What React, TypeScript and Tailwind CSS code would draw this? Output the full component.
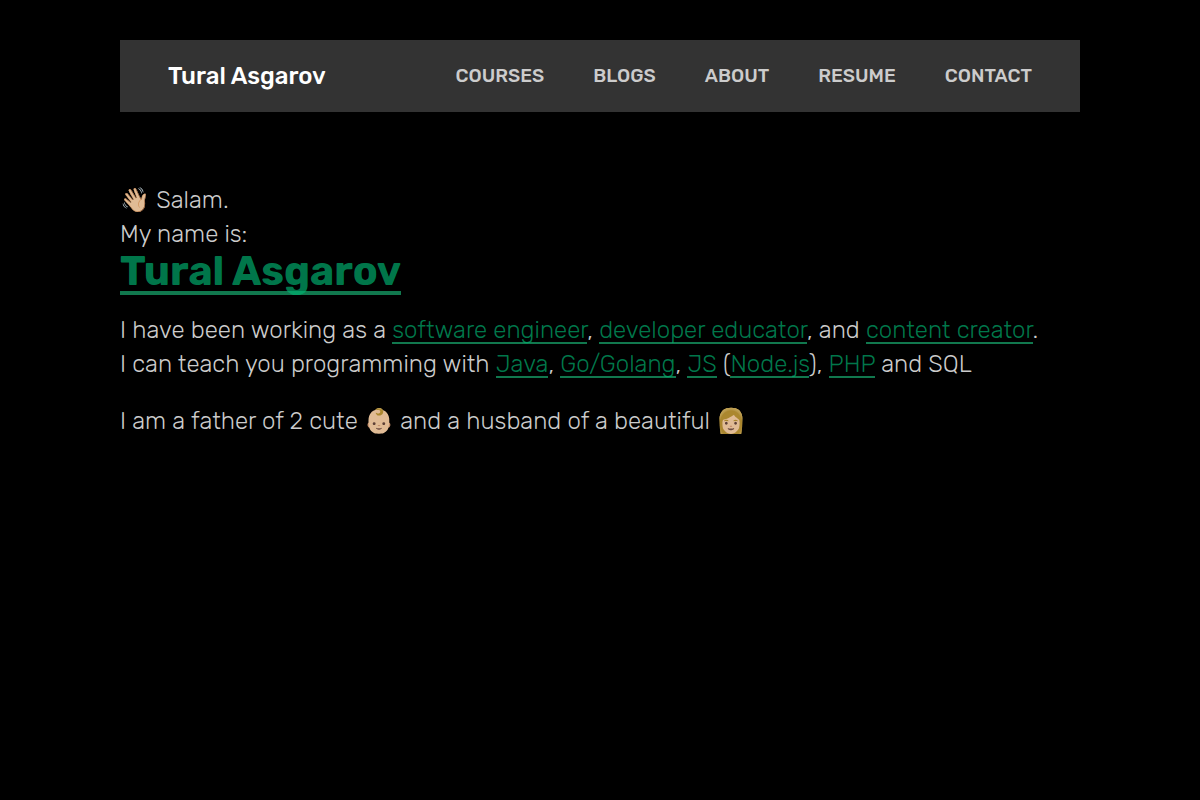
import type { ReactNode } from "react"

const navItems = ["Courses", "Blogs", "About", "Resume", "Contact"]

export default function App() {
    return (
        <div className="min-h-screen bg-black py-10 font-['Rubik','Inter',sans-serif] text-[#cccccc]">
            <div className="mx-auto w-4/5">
                <Header />
                <Intro />
            </div>
        </div>
    )
}

function Header() {
    return (
        <header className="flex h-18 items-center justify-between bg-[#333333] px-12">
            <a href="#home" className="text-2xl font-medium text-white">Tural Asgarov</a>
            <nav className="flex gap-x-[49px]">
                {navItems.map((item) => (
                    <a key={item} href={`#${item.toLowerCase()}`} className="text-[19px] leading-[30px] font-medium uppercase">{item}</a>
                ))}
            </nav>
        </header>
    )
}

function Intro() {
    return (
        <main className="mt-[71px] text-2xl leading-[34px] font-light">
            <p><span role="img" aria-label="waving hand">👋🏼</span> Salam.</p>
            <p>My name is:</p>
            <h1 className="text-[41px] leading-10 font-bold">
                <a href="#about" className="text-[#00b472]/68 shadow-[inset_0_-4px_0_#11784e]">Tural Asgarov</a>
            </h1>
            <p className="mt-[22px]">
                I have been working as a <TextLink>software engineer</TextLink>, <TextLink>developer educator</TextLink>, and <TextLink>content creator</TextLink>.
                <br />
                I can teach you programming with <TextLink>Java</TextLink>, <TextLink>Go/Golang</TextLink>, <TextLink>JS</TextLink> (<TextLink>Node.js</TextLink>), <TextLink>PHP</TextLink> and SQL
            </p>
            <p className="mt-[23px]">
                I am a father of 2 cute <span role="img" aria-label="baby">👶🏼</span> and a husband of a beautiful <span role="img" aria-label="woman">👩🏼</span>
            </p>
        </main>
    )
}

function TextLink({ children }: { children: ReactNode }) {
    return (
        <a href="#about" className="text-[#00b472]/68 shadow-[inset_0_-2px_0_#11784e]">
            {children}
        </a>
    )
}
